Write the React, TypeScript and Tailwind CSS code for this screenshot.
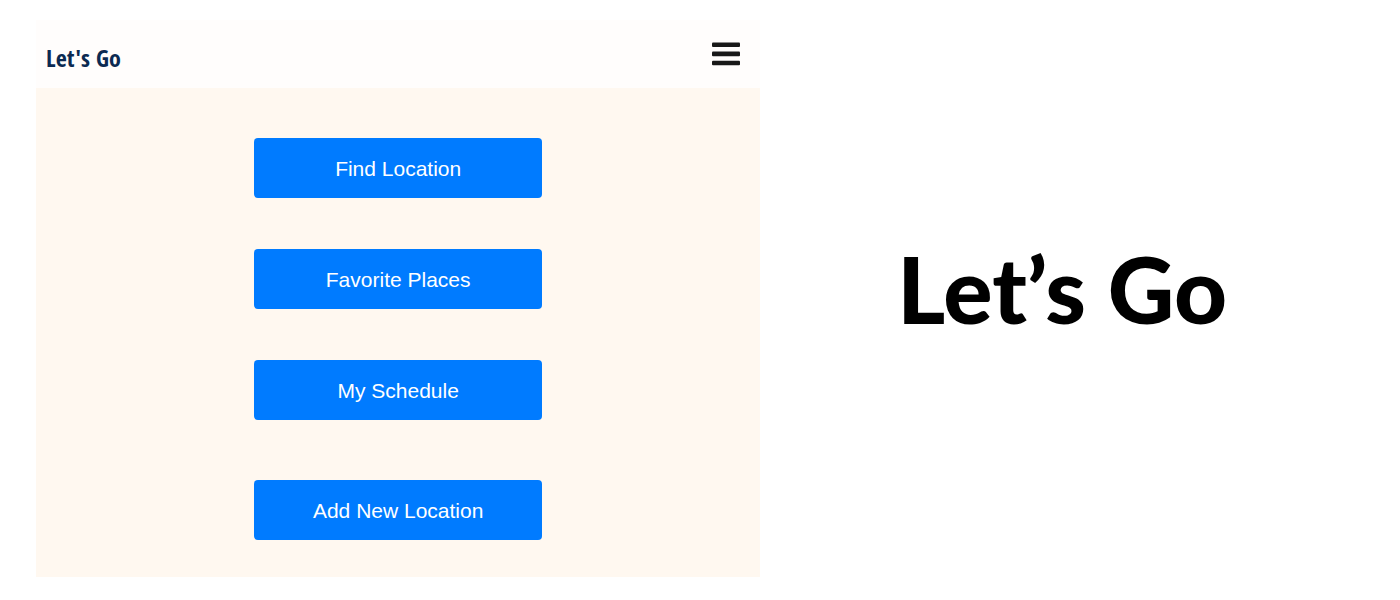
const actions = ["Find Location", "Favorite Places", "My Schedule"];

const buttonClass =
  "h-[60px] w-full rounded-[4px] bg-[#007bff] pt-px font-['Liberation_Sans',Arial,sans-serif] text-[21px] leading-[30px] text-white";

export default function App() {
  return (
    <main className="grid min-h-screen grid-cols-[6fr_5fr] bg-white px-9 pt-5 pb-[23px]">
      <section className="flex flex-col bg-[#fff8f0]">
        <header className="flex h-[68px] items-center justify-between bg-[#fffdfc] pr-5 pl-[10px]">
          <a
            href="#home"
            className="pt-2 font-['Open_Sans_Condensed','Roboto_Condensed','DejaVu_Sans_Condensed',sans-serif] text-[24px] leading-8 text-[#0b2a52]"
          >
            Let's Go
          </a>
          <button type="button" aria-label="Menu">
            <svg width="28" height="24" viewBox="0 0 28 24" fill="#181818">
              <rect y="0.5" width="28" height="4.6" rx="1" />
              <rect y="9.6" width="28" height="4.6" rx="1" />
              <rect y="18.7" width="28" height="4.6" rx="1" />
            </svg>
          </button>
        </header>
        <nav className="mx-auto flex w-[288px] max-w-full flex-col gap-[51px] pt-[50px]">
          {actions.map((label) => (
            <button key={label} type="button" className={buttonClass}>
              {label}
            </button>
          ))}
          <div className="pt-[9px]">
            <button type="button" className={buttonClass}>
              Add New Location
            </button>
          </div>
        </nav>
      </section>
      <section className="flex items-center justify-center pb-5">
        <h1 className="font-['Lato','Noto_Sans',sans-serif] text-[92px] leading-none font-black text-black">
          Let’s Go
        </h1>
      </section>
    </main>
  );
}
